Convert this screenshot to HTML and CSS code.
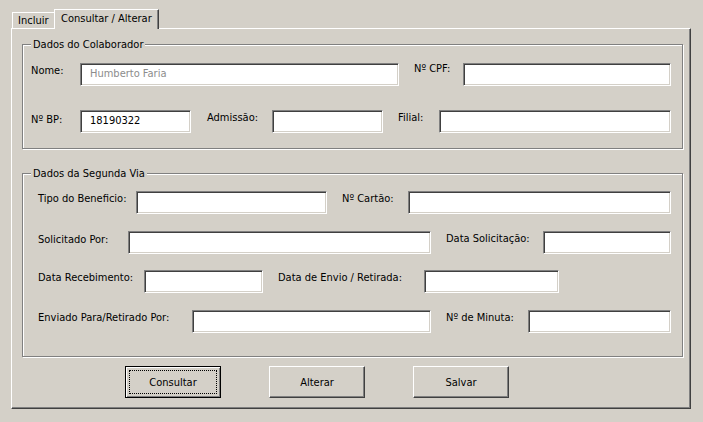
FILE: index.html
```html
<!DOCTYPE html>
<html lang="pt-BR">
<head>
<meta charset="utf-8">
<title>Segunda Via</title>
<link rel="stylesheet" href="styles.css">
</head>
<body>
<div class="tabs">
  <div class="tab">Incluir</div>
  <div class="tab active">Consultar / Alterar</div>
</div>
<div class="panel">
  <div class="group g1">
    <div class="legend">Dados do Colaborador</div>
    <div class="row r1">
      <label class="lbl l-nome">Nome:</label>
      <input class="txt t-nome dim" value="Humberto Faria" readonly>
      <label class="lbl l-cpf up">Nº CPF:</label>
      <input class="txt t-cpf" value="" readonly>
    </div>
    <div class="row r2">
      <label class="lbl l-bp down">Nº BP:</label>
      <input class="txt t-bp" value="18190322" readonly>
      <label class="lbl l-adm">Admissão:</label>
      <input class="txt t-adm" value="" readonly>
      <label class="lbl l-fil">Filial:</label>
      <input class="txt t-fil" value="" readonly>
    </div>
  </div>
  <div class="group g2">
    <div class="legend">Dados da Segunda Via</div>
    <div class="row r1">
      <label class="lbl l-tipo">Tipo do Beneficio:</label>
      <input class="txt t-tipo" value="" readonly>
      <label class="lbl l-cartao">Nº Cartão:</label>
      <input class="txt t-cartao" value="" readonly>
    </div>
    <div class="row r2">
      <label class="lbl l-sol mid">Solicitado Por:</label>
      <input class="txt t-sol" value="" readonly>
      <label class="lbl l-dsol">Data Solicitação:</label>
      <input class="txt t-dsol" value="" readonly>
    </div>
    <div class="row r3">
      <label class="lbl l-rec">Data Recebimento:</label>
      <input class="txt t-rec" value="" readonly>
      <label class="lbl l-env">Data de Envio / Retirada:</label>
      <input class="txt t-env" value="" readonly>
    </div>
    <div class="row r4">
      <label class="lbl l-envp">Enviado Para/Retirado Por:</label>
      <input class="txt t-envp" value="" readonly>
      <label class="lbl l-min">Nº de Minuta:</label>
      <input class="txt t-min" value="" readonly>
    </div>
  </div>
  <div class="buttons">
    <button class="btn default" type="button">Consultar</button>
    <button class="btn" type="button">Alterar</button>
    <button class="btn" type="button">Salvar</button>
  </div>
</div>
</body>
</html>
```

FILE: styles.css
```css
* { box-sizing: border-box; }
html, body { margin: 0; padding: 0; }
body {
  background: #d4d0c8;
  font-family: "DejaVu Sans Condensed", "Liberation Sans", Arial, sans-serif;
  font-size: 11px;
  line-height: 13px;
  color: #000;
  width: 703px;
  height: 422px;
  overflow: hidden;
}

/* tab strip */
.tabs {
  display: flex;
  align-items: flex-end;
  height: 29px;
  padding: 9px 0 0 12px;
  margin-bottom: -1px;
}
.tab {
  width: 42px;
  height: 16px;
  margin-bottom: 1px;
  padding: 1px 0 0 5px;
  border-top: 1px solid #fff;
  border-left: 1px solid #fff;
  white-space: nowrap;
}
.tab.active {
  width: 105px;
  height: 20px;
  margin-bottom: 0;
  padding: 2px 0 0 6px;
  border-right: 1px solid #404040;
  box-shadow: inset -1px 0 #808080;
  background: #d4d0c8;
  position: relative;
  z-index: 1;
}

/* tab page */
.panel {
  margin-left: 11px;
  width: 680px;
  height: 381px;
  padding: 15px 0 0 10px;
  border-top: 1px solid #fff;
  border-left: 1px solid #fff;
  border-right: 1px solid #404040;
  border-bottom: 1px solid #404040;
  box-shadow: inset -1px -1px #808080;
}

/* frames */
.group {
  width: 661px;
  display: flex;
  flex-direction: column;
  border: 1px solid #808080;
  box-shadow: inset 1px 1px #fff, 1px 1px #fff;
}
.g1 { padding-bottom: 15px; }
.g2 { margin-top: 24px; padding-bottom: 23px; }
.legend {
  align-self: flex-start;
  margin: -7px 0 0 8px;
  padding: 0 2px;
  background: #d4d0c8;
  white-space: nowrap;
}

.row { display: flex; align-items: flex-start; }
.g1 .row { padding-left: 8px; }
.g2 .row { padding-left: 15px; }
.g1 .r1 { margin-top: 12px; }
.g1 .r2 { margin-top: 24px; }
.g2 .r1 { margin-top: 11px; }
.g2 .r2 { margin-top: 17px; }
.g2 .r3 { margin-top: 16px; }
.g2 .r4 { margin-top: 17px; }

.lbl { flex: none; margin-top: 1px; white-space: nowrap; }
.lbl.up { margin-top: -1px; }
.lbl.mid { margin-top: 2px; }
.lbl.down { margin-top: 3px; }

.txt {
  flex: none;
  height: 23px;
  margin: 0;
  padding: 0 0 3px 9px;
  font: inherit;
  line-height: 13px;
  color: #000;
  background: #fff;
  border: 1px solid;
  border-color: #808080 #fff #fff #808080;
  box-shadow: inset 1px 1px #404040, inset -1px -1px #d4d0c8;
  border-radius: 0;
  outline: none;
}
.dim { color: #8c8c8c; }

/* group 1 */
.l-nome { width: 49px; }
.t-nome { width: 319px; }
.l-cpf { margin-left: 15px; width: 49px; }
.t-cpf { width: 208px; }
.l-bp { width: 49px; }
.t-bp { width: 111px; }
.l-adm { margin-left: 16px; width: 65px; }
.t-adm { width: 111px; }
.l-fil { margin-left: 15px; width: 41px; }
.t-fil { width: 232px; }

/* group 2 */
.l-tipo { width: 98px; }
.t-tipo { width: 191px; }
.l-cartao { margin-left: 15px; width: 66px; }
.t-cartao { width: 263px; }
.l-sol { width: 90px; }
.t-sol { width: 303px; }
.l-dsol { margin-left: 15px; width: 97px; }
.t-dsol { width: 128px; }
.l-rec { width: 106px; }
.t-rec { width: 119px; }
.l-env { margin-left: 15px; width: 146px; }
.t-env { width: 135px; }
.l-envp { width: 154px; }
.t-envp { width: 239px; }
.l-min { margin-left: 15px; width: 82px; }
.t-min { width: 143px; }

/* command buttons */
.buttons {
  display: flex;
  gap: 48px;
  margin: 9px 0 0 103px;
}
.btn {
  width: 96px;
  height: 32px;
  margin: 0;
  padding: 0;
  font: inherit;
  color: #000;
  background: #d4d0c8;
  border: 1px solid;
  border-color: #fff #404040 #404040 #fff;
  box-shadow: inset -1px -1px #808080;
  border-radius: 0;
}
.btn.default {
  border-color: #000;
  box-shadow: inset 1px 1px #fff, inset -1px -1px #808080;
  outline: 1px dotted #000;
  outline-offset: -5px;
}
```
